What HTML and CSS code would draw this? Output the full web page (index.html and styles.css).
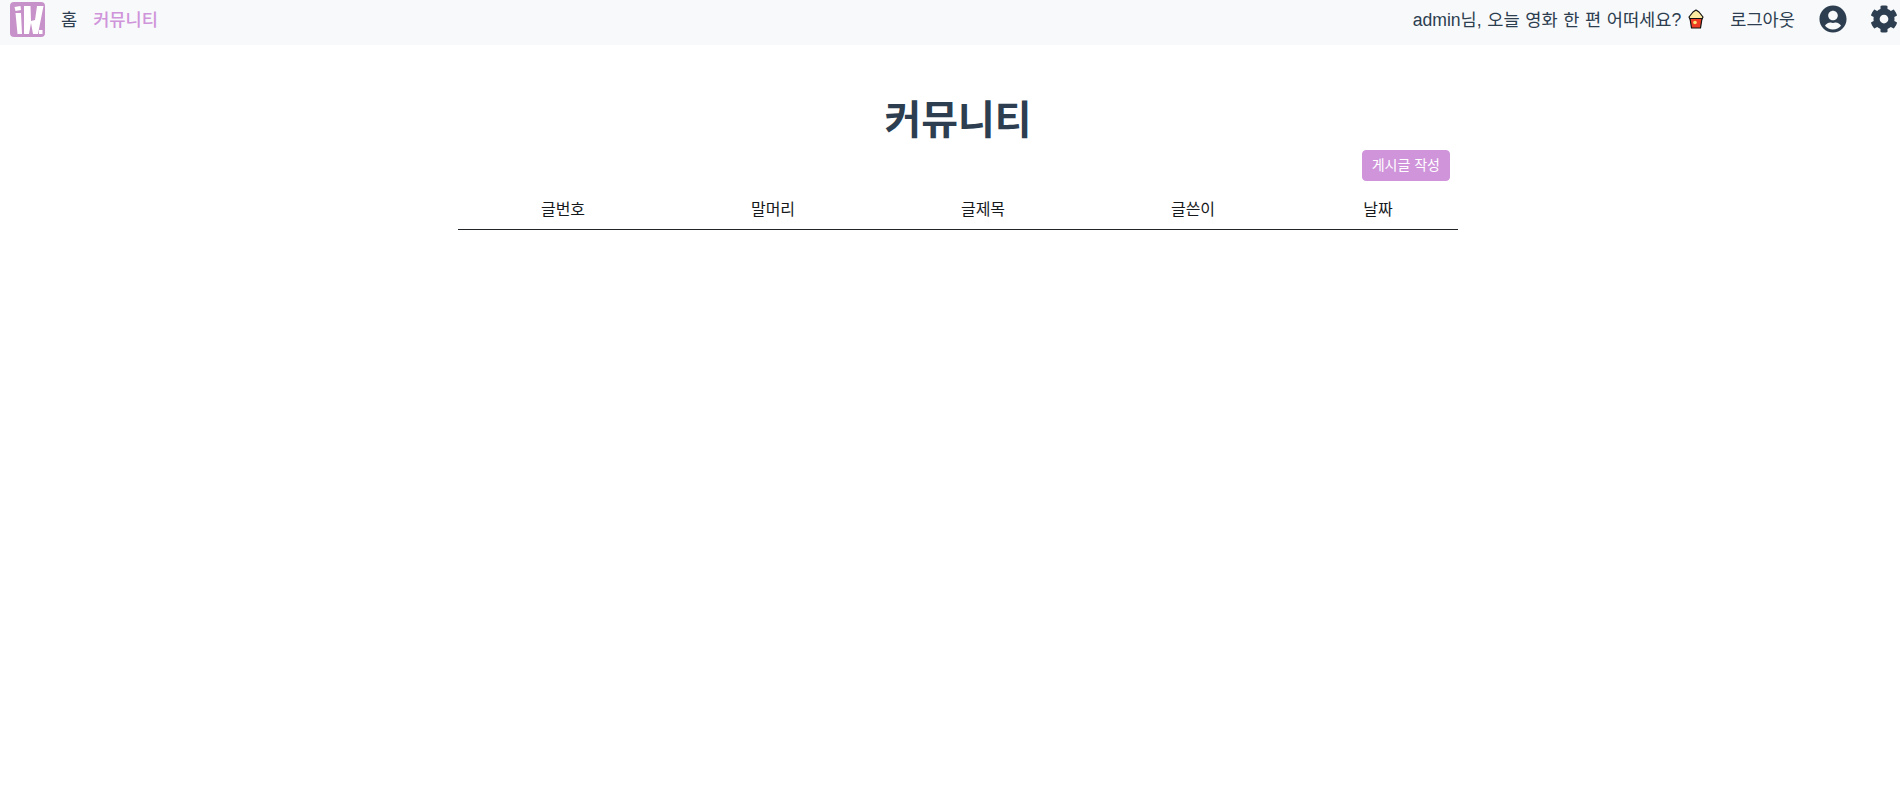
FILE: index.html
```html
<!DOCTYPE html>
<html lang="ko">
<head>
<meta charset="utf-8">
<title>커뮤니티</title>
<link rel="stylesheet" href="styles.css">
</head>
<body>
<nav class="navbar">
  <div class="nav-left">
    <a class="logo" href="#" aria-label="logo">
      <svg width="35" height="35" viewBox="0 0 35 35"><rect width="35" height="35" rx="4" fill="#c792c9"/><path d="M4.500 5l6-1 .5 4-5.500 1zM5.500 11H11l1 21H7.500zM14 4h6.500l.5 15 4-1L27 4h6.500l-5.500 28h-5l-2-11-2 11h-5z" fill="#fff"/><rect x="29" y="28" width="3.500" height="4" fill="#fff"/></svg>
    </a>
    <a class="nav-link" href="#">홈</a>
    <a class="nav-link active" href="#">커뮤니티</a>
  </div>
  <div class="nav-right">
    <span class="greeting">admin님, 오늘 영화 한 편 어떠세요?</span>
    <svg class="popcorn" width="16" height="20" viewBox="0 0 16 20"><path d="M8 1l3 2 4 5-1 2H2L1 8l4-5z" fill="#fbe9a0" stroke="#111" stroke-width="1.200" stroke-linejoin="round"/><path d="M2 9.500h12L12.500 19h-9z" fill="#ef3b24" stroke="#111" stroke-width="1.200" stroke-linejoin="round"/><circle cx="7" cy="13.500" r="1.800" fill="#fde27a"/></svg>
    <a class="nav-link logout" href="#">로그아웃</a>
    <svg class="icon user" width="28" height="28" viewBox="0 0 496 512"><path fill="#2c3e50" d="M248 8C111 8 0 119 0 256s111 248 248 248 248-111 248-248S385 8 248 8zm0 96c48.600 0 88 39.400 88 88s-39.400 88-88 88-88-39.400-88-88 39.400-88 88-88zm0 344c-58.700 0-111.300-26.600-146.500-68.200 18.800-35.400 55.600-59.800 98.500-59.800 2.400 0 4.800.4 7.100 1.100 13 4.200 26.600 6.900 40.900 6.900 14.300 0 28-2.700 40.900-6.900 2.300-.7 4.700-1.100 7.100-1.100 42.900 0 79.700 24.400 98.500 59.800C359.300 421.400 306.700 448 248 448z"/></svg>
    <svg class="icon gear" width="28" height="28" viewBox="0 0 512 512"><path fill="#2c3e50" d="M487.400 315.700l-42.600-24.600c4.300-23.200 4.300-47 0-70.200l42.600-24.600c4.900-2.800 7.100-8.600 5.500-14-11.100-35.600-30-67.800-54.700-94.600-3.800-4.100-10-5.100-14.800-2.300L380.800 110c-17.900-15.400-38.500-27.300-60.800-35.100V25.800c0-5.600-3.900-10.500-9.400-11.700-36.700-8.200-74.300-7.800-109.200 0-5.500 1.200-9.400 6.100-9.400 11.700V75c-22.200 7.900-42.800 19.800-60.800 35.100L88.700 85.500c-4.900-2.800-11-1.900-14.800 2.300-24.700 26.700-43.600 58.900-54.700 94.600-1.700 5.400.6 11.200 5.500 14L67.300 221c-4.300 23.200-4.300 47 0 70.200l-42.600 24.600c-4.900 2.800-7.100 8.600-5.500 14 11.100 35.600 30 67.800 54.700 94.600 3.800 4.100 10 5.100 14.800 2.300l42.600-24.600c17.900 15.400 38.500 27.300 60.800 35.100v49.200c0 5.600 3.900 10.500 9.400 11.700 36.700 8.200 74.300 7.800 109.200 0 5.500-1.200 9.400-6.100 9.400-11.700v-49.200c22.200-7.900 42.800-19.800 60.800-35.100l42.600 24.600c4.900 2.800 11 1.900 14.800-2.300 24.700-26.700 43.600-58.900 54.700-94.600 1.500-5.500-.7-11.300-5.600-14.100zM256 336c-44.100 0-80-35.900-80-80s35.900-80 80-80 80 35.900 80 80-35.900 80-80 80z"/></svg>
  </div>
</nav>
<div class="page">
<main class="board">
  <h1 class="title">커뮤니티</h1>
  <div class="actions"><button class="btn-write" type="button">게시글 작성</button></div>
  <table class="posts">
    <thead>
      <tr>
        <th class="col">글번호</th>
        <th class="col">말머리</th>
        <th class="col">글제목</th>
        <th class="col">글쓴이</th>
        <th class="col-date">날짜</th>
      </tr>
    </thead>
  </table>
</main>
</div>
</body>
</html>
```
FILE: styles.css
```css
* { box-sizing: border-box; }
html, body { margin: 0; padding: 0; }
body {
  min-height: 797px;
  background: #fff;
  color: #2c3e50;
  font-family: "Liberation Sans", "Noto Sans CJK KR", sans-serif;
  font-size: 17.6px;
  line-height: 1.5;
}
.navbar {
  display: flex;
  justify-content: space-between;
  align-items: center;
  height: 45px;
  padding: 0 2px 6px 10px;
  background: #f8f9fa;
}
.nav-left, .nav-right { display: flex; align-items: center; }
.logo { display: flex; margin-right: 16px; }
.nav-link { padding-top: 2px; color: #2c3e50; text-decoration: none; margin-right: 16px; }
.nav-link.active { color: #cf94da; font-weight: 500; }
.greeting { padding-top: 1px; word-spacing: 0.7px; }
.popcorn { margin-left: 7px; }
.logout { margin-left: 26px; margin-right: 24px; }
.icon { display: block; }
.user { margin-right: 23px; }
.page { display: flex; justify-content: center; padding-left: 16px; }
.board { width: 1000px; }
.title {
  margin: 0;
  padding-top: 51px;
  height: 105px;
  font-size: 40px;
  line-height: 48px;
  font-weight: 700;
  text-align: center;
}
.actions { display: flex; justify-content: flex-end; padding-right: 8px; }
.btn-write {
  height: 31px;
  padding: 0 9px;
  border: 1px solid #cf94da;
  border-radius: 4px;
  background: #cf94da;
  color: #fff;
  font-family: inherit;
  font-size: 14px;
  line-height: 1.5;
}
.posts { width: 100%; border-collapse: separate; border-spacing: 0; table-layout: fixed; margin-top: 8px; }
.posts th {
  padding: 9px 0 7px;
  height: 41px;
  border-bottom: 1px solid #212529;
  color: #16191c;
  font-size: 16px;
  font-weight: 400;
  text-align: center;
}
.col { width: 210px; }
.col-date { width: 160px; }
```
